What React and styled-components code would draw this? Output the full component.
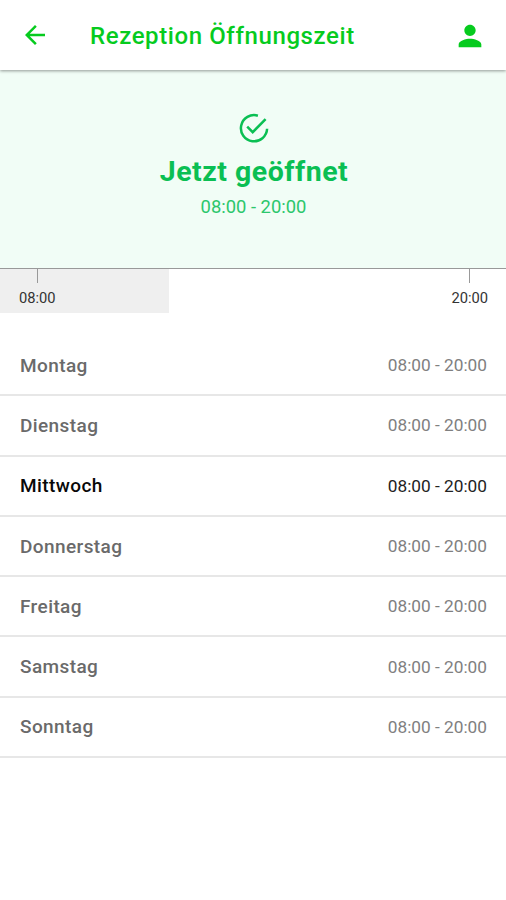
import React from 'react';
import styled, { createGlobalStyle } from 'styled-components';
import { MdArrowBack, MdPerson } from 'react-icons/md';

const GlobalStyle = createGlobalStyle`
  * {
    box-sizing: border-box;
  }
  body {
    margin: 0;
    background: #fff;
    font-family: Roboto, sans-serif;
  }
`;

const Screen = styled.div`
  width: 100%;
  max-width: 506px;
  height: 900px;
  overflow: hidden;
  background: #fff;
`;

const Header = styled.header`
  position: relative;
  display: flex;
  align-items: center;
  height: 70px;
  padding: 2px 19px 0 20px;
  color: #06cb1e;
  background: #fff;
  box-shadow: 0 1px 3px rgba(0, 0, 0, 0.4);
`;

const BackIcon = styled(MdArrowBack)`
  margin-top: -3px;
`;

const Title = styled.h1`
  flex: 1;
  margin: 0 0 0 40px;
  font-size: 24px;
  font-weight: 500;
  letter-spacing: 0.6px;
`;

const Status = styled.section`
  display: flex;
  flex-direction: column;
  align-items: center;
  height: 198px;
  padding-top: 43px;
  color: #0abf53;
  background: #f1fdf6;
`;

const StatusIcon = styled.svg`
  margin-left: 2px;
`;

const StatusText = styled.h2`
  margin: 11px 0 0 2px;
  font-size: 28.5px;
  font-weight: 700;
  line-height: 36px;
  letter-spacing: 0.5px;
`;

const StatusTime = styled.p`
  margin: 5px 0 0 1px;
  font-size: 18.4px;
  line-height: 24px;
  color: #2cc76c;
`;

const Timeline = styled.div`
  display: flex;
  justify-content: space-between;
  height: 45px;
  padding: 0 18px 0 19px;
  border-top: 1px solid #999;
  background: linear-gradient(#efefef, #efefef) 0 0 / 169px 100% no-repeat;
`;

const Mark = styled.div`
  display: flex;
  flex-direction: column;
  align-items: center;
  font-size: 14.7px;
  line-height: 18px;
  color: #333;

  &::before {
    content: '';
    width: 1px;
    height: 14px;
    margin-bottom: 6px;
    background: #999;
  }
`;

const DayList = styled.ul`
  margin: 23px 0 0;
  padding: 0;
  list-style: none;
`;

const Day = styled.li`
  display: flex;
  align-items: center;
  justify-content: space-between;
  height: 60.3px;
  padding: 0 19px 0 20px;
  border-bottom: 2px solid #e7e7e7;
  font-size: 19px;
  font-weight: 500;
  letter-spacing: 0.4px;
  color: ${(props) => (props.$today ? '#080808' : '#6a6a6a')};
`;

const Hours = styled.span`
  font-size: 17.25px;
  font-weight: 400;
  letter-spacing: 0;
  color: ${(props) => (props.$today ? '#222' : '#808080')};
`;

const days = ['Montag', 'Dienstag', 'Mittwoch', 'Donnerstag', 'Freitag', 'Samstag', 'Sonntag'];
const today = 'Mittwoch';

function CheckIcon() {
  return (
    <StatusIcon width="30" height="30" viewBox="0 0 30 30" fill="none" stroke="currentColor" strokeWidth="2.5">
      <path d="M28.1 15.8A13.1 13.1 0 1 1 18.9 2.7" />
      <path d="M8.2 13.7L13.7 19.2L26.6 6.2" />
    </StatusIcon>
  );
}

export default function App() {
  return (
    <>
      <GlobalStyle />
      <Screen>
        <Header>
          <BackIcon size={30} />
          <Title>Rezeption Öffnungszeit</Title>
          <MdPerson size={34} />
        </Header>
        <Status>
          <CheckIcon />
          <StatusText>Jetzt geöffnet</StatusText>
          <StatusTime>08:00 - 20:00</StatusTime>
        </Status>
        <Timeline>
          <Mark>08:00</Mark>
          <Mark>20:00</Mark>
        </Timeline>
        <DayList>
          {days.map((day) => (
            <Day key={day} $today={day === today}>
              {day}
              <Hours $today={day === today}>08:00 - 20:00</Hours>
            </Day>
          ))}
        </DayList>
      </Screen>
    </>
  );
}
